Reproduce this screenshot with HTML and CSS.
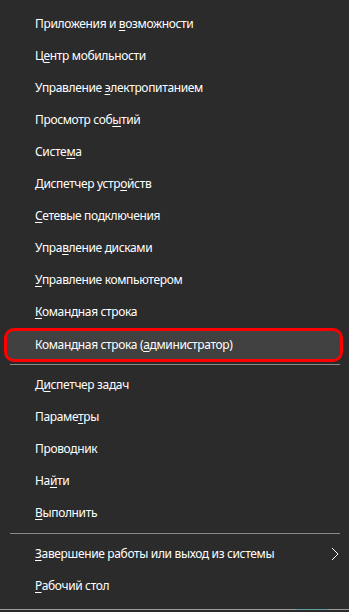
FILE: index.html
```html
<html>
    <head>
        <title>Win+X</title>
        <link rel="stylesheet" href="styles.css">
    </head>
    <body>
        <div class="menu">
            <div class="group">
                <div class="item">Приложения и <u>в</u>озможности</div>
                <div class="item">Ц<u>е</u>нтр мобильности</div>
                <div class="item">Управление <u>э</u>лектропитанием</div>
                <div class="item">Просмотр соб<u>ы</u>тий</div>
                <div class="item">Систе<u>м</u>а</div>
                <div class="item">Диспетчер устр<u>о</u>йств</div>
                <div class="item"><u>С</u>етевые подключения</div>
                <div class="item">Упра<u>в</u>ление дисками</div>
                <div class="item"><u>У</u>правление компьютером</div>
                <div class="item"><u>К</u>омандная строка</div>
                <div class="item active">Командная строка (<u>а</u>дминистратор)</div>
            </div>
            <div class="separator"></div>
            <div class="group">
                <div class="item">Д<u>и</u>спетчер задач</div>
                <div class="item">Параме<u>т</u>ры</div>
                <div class="item">Проводник</div>
                <div class="item">На<u>й</u>ти</div>
                <div class="item"><u>В</u>ыполнить</div>
            </div>
            <div class="separator second"></div>
            <div class="group">
                <div class="item submenu">
                    <span><u>З</u>авершение работы или выход из системы</span>
                    <svg class="chevron" width="8" height="14" viewBox="0 0 8 14"><polyline points="1,1 7,7 1,13" fill="none" stroke="#ffffff" stroke-width="1"/></svg>
                </div>
                <div class="item"><u>Р</u>абочий стол</div>
            </div>
        </div>
        <div class="taskbarEdge"><div class="taskbarTeal"></div></div>
    </body>
</html>
```

FILE: styles.css
```css
body {
    margin: 0;
    background-color: #2b2b2b;
    width: 349px;
    height: 612px;
    overflow: hidden;
    font-family: "Noto Sans", "Open Sans", sans-serif;
    font-size: 12px;
    letter-spacing: -0.35px;
    color: #ffffff;
}
.menu {
    padding-top: 8px;
}
.item {
    height: 32px;
    line-height: 32px;
    padding-left: 35px;
    white-space: nowrap;
}
.item u {
    text-decoration-thickness: 1px;
    text-underline-offset: 2px;
}
.active {
    box-sizing: border-box;
    height: 34px;
    line-height: 28px;
    margin: 0 6px 0 4px;
    padding-left: 28px;
    border: 3px solid #ff0000;
    border-radius: 10px;
    background-color: #414141;
}
.separator {
    height: 1px;
    margin: 2px 9px 4px 10px;
    background-color: #8a8a8a;
}
.separator.second {
    margin-top: 4px;
}
.submenu {
    display: flex;
    justify-content: space-between;
    align-items: center;
    padding-right: 10px;
}
.chevron {
    display: block;
}
.taskbarEdge {
    margin-top: 7px;
    height: 1px;
    background-color: #9a9a9a;
    position: relative;
}
.taskbarTeal {
    position: absolute;
    left: 296px;
    width: 32px;
    height: 1px;
    background-color: #5f9ea0;
}
```
